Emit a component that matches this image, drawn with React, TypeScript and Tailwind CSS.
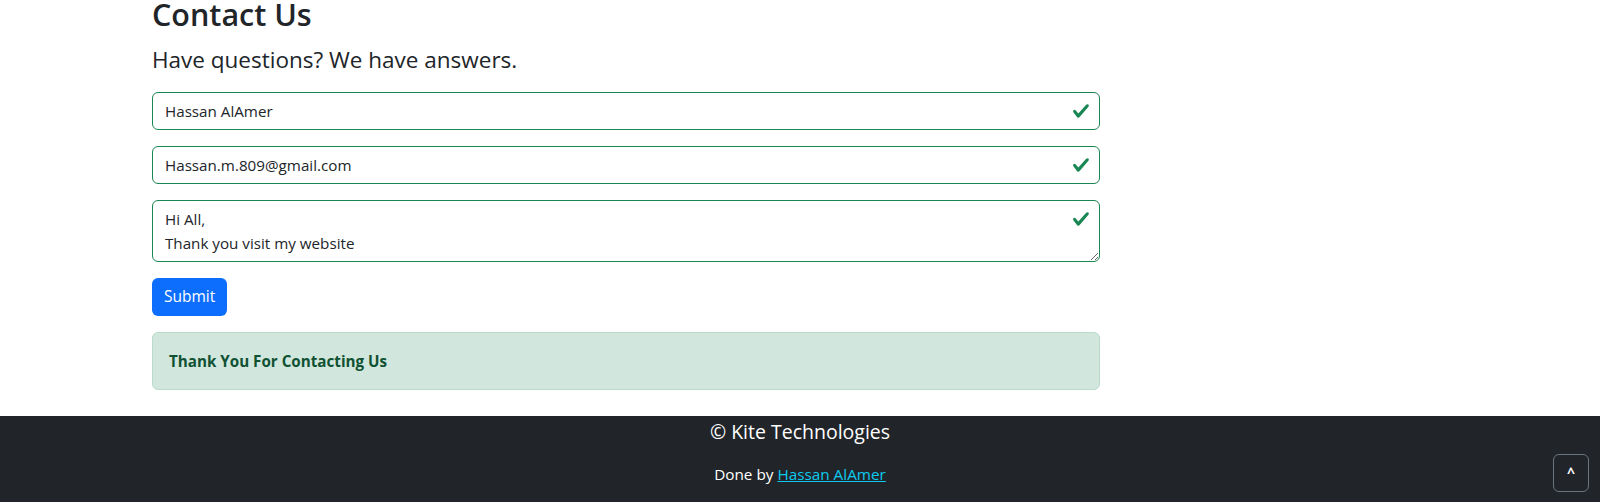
import React from "react";

/**
 * Contact page: form with validated fields, success alert and footer
 */

const font = { fontFamily: '"Open Sans", "Noto Sans", sans-serif' };

/* Bootstrap-like valid checkmark */
function ValidCheck({ className }: { className: string }) {
  return (
    <svg
      className={className}
      viewBox="0 0 8 8"
      width="18"
      height="18"
      aria-hidden="true"
    >
      <path
        fill="#198754"
        d="M2.3 6.73.6 4.53c-.4-1.04.46-1.4 1.1-.8l1.1 1.4 3.4-3.8c.6-.63 1.6-.27 1.2.7l-4 4.6c-.43.5-.8.4-1.1.1z"
      />
    </svg>
  );
}

function ValidInput({ value }: { value: string }) {
  return (
    <div className="relative mb-4">
      <input
        type="text"
        defaultValue={value}
        className="block w-full h-[38px] pl-3 pr-9 text-[15.2px] text-[#212529] bg-white border border-[#198754] rounded-md outline-none"
      />
      <ValidCheck className="absolute right-[10px] top-1/2 -translate-y-1/2 pointer-events-none" />
    </div>
  );
}

export default function App() {
  return (
    <div className="relative w-[1600px] h-[502px] overflow-hidden bg-white" style={font}>
      <main className="pl-[152px] w-[1100px] -mt-[5px]">
        {/* Heading */}
        <h2 className="text-[30.5px] leading-[38px] font-semibold text-[#212529]">Contact Us</h2>
        <p className="mt-[12px] text-[22.5px] leading-[30px] text-[#212529]">
          Have questions? We have answers.
        </p>

        {/* Form */}
        <form className="mt-[17px]" onSubmit={(e) => e.preventDefault()}>
          <ValidInput value="Hassan AlAmer" />
          <ValidInput value="Hassan.m.809@gmail.com" />

          <div className="relative mb-4">
            <textarea
              rows={2}
              defaultValue={"Hi All,\nThank you visit my website"}
              className="block w-full h-[62px] py-[6px] pl-3 pr-9 text-[15.2px] leading-6 text-[#212529] bg-white border border-[#198754] rounded-md outline-none resize-y"
            />
            <ValidCheck className="absolute right-[10px] top-[10px] pointer-events-none" />
          </div>

          <button
            type="submit"
            className="h-[38px] px-3 text-[15.5px] text-white bg-[#0d6efd] rounded-md"
          >
            Submit
          </button>
        </form>

        {/* Success alert */}
        <div className="mt-4 h-[58px] flex items-center px-4 bg-[#d1e7dd] border border-[#badbcc] rounded-md text-[#0f5132] text-[15.2px] font-bold">
          Thank You For Contacting Us
        </div>
      </main>

      {/* Footer */}
      <footer className="absolute left-0 right-0 bottom-0 h-[86px] bg-[#212529] text-white text-center">
        <div className="pt-[1px] text-[19.5px] leading-[30px]">© Kite Technologies</div>
        <div className="mt-[15px] text-[15.3px] leading-6">
          Done by{" "}
          <a href="#" className="text-[#0dcaf0] underline">
            Hassan AlAmer
          </a>
        </div>
        <button className="absolute right-[11px] bottom-[10px] w-[36px] h-[38px] border border-[#6c757d] rounded-md text-white text-[14px] font-bold leading-none">
          ^
        </button>
      </footer>
    </div>
  );
}
